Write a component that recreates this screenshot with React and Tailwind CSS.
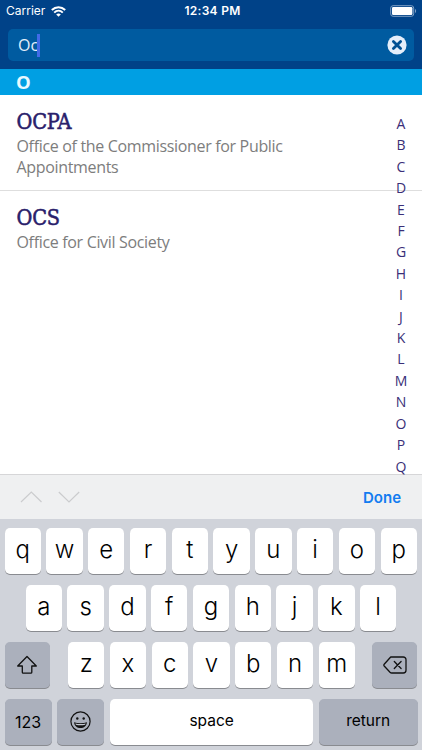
import React from "react";

const letters = "ABCDEFGHIJKLMNOPQ".split("");

const entries = [
  { code: "OCPA", name: "Office of the Commissioner for Public Appointments" },
  { code: "OCS", name: "Office for Civil Society" },
];

function StatusBar() {
  return (
    <div className="grid h-[22px] grid-cols-3 items-center pl-[6px] pr-[5px] text-white">
      <div className="flex items-center gap-[6px]">
        <span className="text-[12px] leading-[22px]">Carrier</span>
        <svg width="15" height="11" viewBox="0 0 15 11" fill="none" stroke="white" strokeWidth="2">
          <path d="M.8 4C4.7.2 10.3.2 14.2 4" />
          <path d="M3.2 6.6c2.5-2.4 6.1-2.4 8.6 0" />
          <path d="M7.5 10.8 5.2 8.5c1.3-1.2 3.3-1.2 4.6 0z" fill="white" stroke="none" />
        </svg>
      </div>
      <div className="pl-[2px] text-center text-[12px] font-semibold leading-[22px] tracking-[0.3px]">12:34 PM</div>
      <svg className="justify-self-end" width="27" height="12" viewBox="0 0 27 12">
        <rect x=".7" y=".7" width="23" height="10.6" rx="2.4" fill="none" stroke="#7fa1c5" />
        <rect x="2" y="2" width="20.4" height="8" rx="1.2" fill="white" />
        <path d="M25 4c1.5.6 1.5 3.4 0 4z" fill="#7fa1c5" />
      </svg>
    </div>
  );
}

function SearchField() {
  return (
    <div className="mx-2 mt-[7px] flex h-8 items-center rounded-[5px] bg-[#005ba0] pl-[10px] pr-[7px]">
      <span className="font-['Open_Sans',sans-serif] text-[16px] leading-8 text-[#e3eefa]">Oc</span>
      <span className="-ml-[1.5px] h-[23px] w-[3px] bg-[#426be8]" />
      <svg className="ml-auto" width="20" height="20" viewBox="0 0 20 20">
        <circle cx="10" cy="10" r="9.6" fill="#e4eefa" />
        <path d="m6.4 6.4 7.2 7.2m0-7.2-7.2 7.2" stroke="#005093" strokeWidth="2.8" strokeLinecap="round" />
      </svg>
    </div>
  );
}

function Key({ label }) {
  return (
    <div className="flex h-[46px] w-[36.4px] justify-center rounded-[5px] bg-white text-[24px] font-[350] leading-[43px] shadow-[0_1px_0_#898b90]">
      {label}
    </div>
  );
}

function KeyRow({ keys }) {
  return (
    <div className="flex gap-[5.4px]">
      {keys.split("").map((k) => (
        <Key key={k} label={k} />
      ))}
    </div>
  );
}

function Keyboard() {
  return (
    <div className="flex h-[231px] flex-col gap-[11.1px] bg-[#d0d3da] px-[4.5px] pt-[8.6px] text-black">
      <KeyRow keys="qwertyuiop" />
      <div className="flex justify-center">
        <KeyRow keys="asdfghjkl" />
      </div>
      <div className="flex justify-between">
        <div className="mr-[1px] flex h-[46px] w-[45.5px] items-center justify-center rounded-[5px] bg-[#abb0bc] shadow-[0_1px_0_#898b90]">
          <svg width="22" height="20" viewBox="0 0 22 20" fill="none" stroke="#111" strokeWidth="1.3" strokeLinejoin="round">
            <path d="M11 1.5 20.3 11h-4.5v6.2c0 .6-.4 1-1 1H7.3c-.6 0-1-.4-1-1V11H1.7z" />
          </svg>
        </div>
        <KeyRow keys="zxcvbnm" />
        <div className="flex h-[46px] w-[45.5px] items-center justify-center rounded-[5px] bg-[#abb0bc] shadow-[0_1px_0_#898b90]">
          <svg width="24" height="18" viewBox="0 0 24 18" fill="none" stroke="#111" strokeWidth="1.3" strokeLinejoin="round" strokeLinecap="round">
            <path d="M8 1h12.3A2.7 2.7 0 0 1 23 3.7v10.6a2.7 2.7 0 0 1-2.7 2.7H8.8c-.7 0-1.3-.3-1.8-.8L1.2 10c-.5-.6-.5-1.2 0-1.8L7 1.8C7.3 1.3 7.7 1 8 1z" />
            <path d="m11.3 5.5 6.8 7m0-7-6.8 7" />
          </svg>
        </div>
      </div>
      <div className="flex gap-[5.8px] text-[15.5px] leading-[44px]">
        <div className="h-[46px] w-[47px] rounded-[5px] bg-[#abb0bc] text-center text-[16px] leading-[46px] shadow-[0_1px_0_#898b90]">123</div>
        <div className="flex h-[46px] w-[47px] items-center justify-center rounded-[5px] bg-[#abb0bc] shadow-[0_1px_0_#898b90]">
          <svg width="21" height="21" viewBox="0 0 21 21">
            <circle cx="10.5" cy="10.5" r="9.6" fill="none" stroke="#111" strokeWidth="1.2" />
            <circle cx="7.3" cy="7.5" r="1.2" fill="#111" />
            <circle cx="13.7" cy="7.5" r="1.2" fill="#111" />
            <path d="M4 11.3c3.8 1.2 9.2 1.2 13 0-.5 3.6-3 5.8-6.5 5.8S4.5 14.9 4 11.3z" fill="#111" />
            <path d="M5.3 12.4c3.2.8 7.2.8 10.4 0l-.6 1.3c-2.7.8-6.5.8-9.2 0z" fill="#c5c9d2" />
          </svg>
        </div>
        <div className="h-[46px] w-[203px] rounded-[5px] bg-white text-center shadow-[0_1px_0_#898b90]">space</div>
        <div className="h-[46px] flex-1 rounded-[5px] bg-[#abb0bc] text-center shadow-[0_1px_0_#898b90]">return</div>
      </div>
    </div>
  );
}

export default function App() {
  return (
    <div className="flex h-[750px] w-[422px] flex-col overflow-hidden bg-white font-['Inter',sans-serif]">
      <header className="h-[69px] shrink-0 bg-[#004288]">
        <StatusBar />
        <SearchField />
      </header>
      <div className="h-[26px] shrink-0 bg-[#009fe3] pl-[16px] font-['Open_Sans',sans-serif] text-[18.5px] font-bold leading-[26px] text-[#e9f8ff]">O</div>
      <main className="relative h-[379px] shrink-0 font-['Open_Sans',sans-serif]">
        {entries.map((e) => (
          <section key={e.code} className="border-b border-[#dedede] px-[16.5px] pb-[11px] pt-[13px] last-of-type:border-0">
            <h2 className="mb-[1px] font-['DejaVu_Serif_Condensed','DejaVu_Serif',serif] text-[21.5px] leading-[27px] tracking-[-0.2px] text-[#29206b] [-webkit-text-stroke:0.5px_#29206b]">{e.code}</h2>
            <p className="w-[290px] text-[16px] leading-[21.3px] tracking-[-0.33px] text-[#7d7d7d]">{e.name}</p>
          </section>
        ))}
        <nav className="absolute right-[11px] top-[18px] w-5 text-center text-[14px] leading-[21.4px] text-[#3a2f78]">
          {letters.map((l) => (
            <div key={l}>{l}</div>
          ))}
        </nav>
      </main>
      <div className="flex h-[45px] shrink-0 items-center border-t border-[#d6d6d8] bg-[#eff0f1] pl-[20px] pr-[21px]">
        <svg width="60" height="14" viewBox="0 0 60 14" fill="none" stroke="#cbccce" strokeWidth="1.2">
          <path d="M1 12 11.3 2l10.2 10M38.8 2 49 12 59.2 2" />
        </svg>
        <span className="ml-auto pt-[2px] text-[15px] font-semibold text-[#127cf0]">Done</span>
      </div>
      <Keyboard />
    </div>
  );
}
